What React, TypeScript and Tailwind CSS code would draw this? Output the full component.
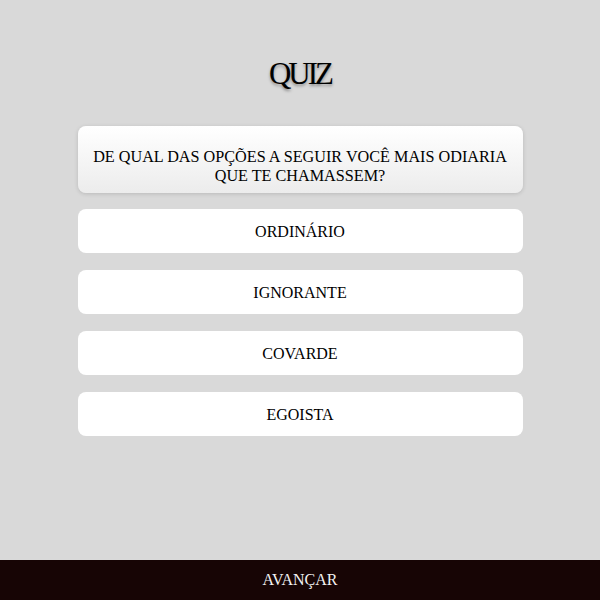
export default function App() {
  const options = ["ORDINÁRIO", "IGNORANTE", "COVARDE", "EGOISTA"];
  return (
    <div className="flex h-[600px] w-[600px] flex-col bg-[#d9d9d9] font-['Liberation_Serif',serif] text-black">
      <div className="flex flex-1 flex-col items-center">
        <h1 className="mt-[56px] text-[31px] leading-[36px] tracking-[-3px] [text-shadow:0_2px_3px_rgba(0,0,0,0.35)]">
          QUIZ
        </h1>
        <div className="mt-[34px] flex h-[67px] w-[445px] items-center justify-center rounded-[8px] bg-gradient-to-b from-[#ffffff] to-[#ececec] px-3 pt-[14px] text-center text-[16.2px] leading-[19px] shadow-[0_1px_4px_rgba(0,0,0,0.15)]">
          DE QUAL DAS OPÇÕES A SEGUIR VOCÊ MAIS ODIARIA QUE TE CHAMASSEM?
        </div>
        <div className="mt-[16px] flex flex-col gap-[17px]">
          {options.map((o) => (
            <button
              key={o}
              className="flex h-[44px] w-[445px] items-center justify-center rounded-[8px] bg-white pt-[2px] text-[16px]"
            >
              {o}
            </button>
          ))}
        </div>
      </div>
      <div className="flex h-[40px] items-center justify-center bg-[#170505] text-[16px] text-[#f2f2f2]">
        AVANÇAR
      </div>
    </div>
  );
}
